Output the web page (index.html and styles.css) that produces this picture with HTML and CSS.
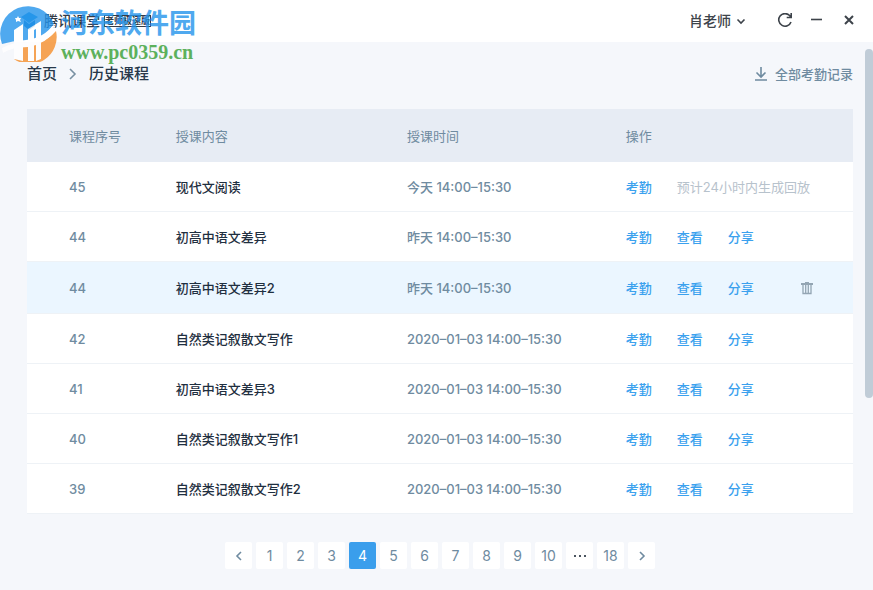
FILE: index.html
```
<!DOCTYPE html>
<html lang="zh-CN">
<head>
    <meta charset="UTF-8">
    <meta name="viewport" content="width=device-width, initial-scale=1.0">
    <title>腾讯课堂 - 历史课程</title>
    <link rel="stylesheet" href="styles.css">
</head>
<body>
    <header class="top-bar">
        <div class="brand">
            <svg class="brand-logo" viewBox="0 0 24 20" aria-hidden="true">
                <path d="M5 6 13 1l9 5-9 6z" fill="#2b9fe6"/>
                <path d="M8 9v6l5 4 6-4V9l-6 4z" fill="#1c86d1"/>
            </svg>
            <span class="brand-name">腾讯课堂</span>
            <span class="brand-tag">老师极速版</span>
        </div>
        <div class="window-controls">
            <button class="user-button" type="button">肖老师
                <svg class="caret" viewBox="0 0 12 12" aria-hidden="true"><path d="M2.500 4.500 6 8l3.500-3.500"/></svg>
            </button>
            <button class="icon-button" type="button" aria-label="刷新">
                <svg viewBox="0 0 16 16"><path d="M14 9A6.300 6.300 0 1 1 12.600 2.500L14 4.200M14.200 0v4.500H9.700"/></svg>
            </button>
            <button class="icon-button" type="button" aria-label="最小化">
                <svg viewBox="0 0 16 16"><path d="M2 6.500h11"/></svg>
            </button>
            <button class="icon-button close" type="button" aria-label="关闭">
                <svg viewBox="0 0 16 16"><path d="M4 3l8 8M12 3l-8 8"/></svg>
            </button>
        </div>
    </header>

    <div class="watermark">
        <svg class="watermark-logo" viewBox="0 0 58 58" aria-hidden="true">
            <path d="M2 40A27 27 0 1 1 54 20Q44 34 26 36Q12 37 2 40z" fill="#2494ec"/>
            <path d="M56 27A27 27 0 0 1 14 55V43Q42 43 56 27z" fill="#f58f2c"/>
            <path d="M2 44Q12 38 28 38Q44 35 54 20L56 26Q46 40 28 43Q12 43 3 49z" fill="#fff"/>
            <path d="M14 26l9-6v37l-9-2zM28 25l13-8v38l-5 2V25l-2 1v31h-6z" fill="#fff"/>
            <path d="M18 12l1 2 2 0-1 2 1 2-3-1-2 1 0-2-1-2h2z" fill="#fff"/>
        </svg>
        <div class="watermark-text">
            <span class="watermark-title">河东软件园</span>
            <span class="watermark-url">www.pc0359.cn</span>
        </div>
    </div>

    <main class="content">
        <div class="page-head">
            <nav class="breadcrumb">
                <a href="#">首页</a>
                <svg viewBox="0 0 8 12" aria-hidden="true"><path d="M1 1l5 5-5 5"/></svg>
                <span>历史课程</span>
            </nav>
            <a class="download" href="#">
                <svg viewBox="0 0 12 14" aria-hidden="true"><path d="M6 0v10M1.500 5.500 6 10l4.500-4.500M0 13h12"/></svg>
                全部考勤记录
            </a>
        </div>

        <table class="course-table">
            <thead>
                <tr>
                    <th class="col-id">课程序号</th>
                    <th class="col-name">授课内容</th>
                    <th class="col-time">授课时间</th>
                    <th class="col-action">操作</th>
                </tr>
            </thead>
            <tbody>
                <tr>
                    <td>45</td>
                    <td class="name">现代文阅读</td>
                    <td>今天 14:00–15:30</td>
                    <td><div class="actions"><a href="#">考勤</a><span class="pending">预计24小时内生成回放</span></div></td>
                </tr>
                <tr>
                    <td>44</td>
                    <td class="name">初高中语文差异</td>
                    <td>昨天 14:00–15:30</td>
                    <td><div class="actions"><a href="#">考勤</a><a href="#">查看</a><a href="#">分享</a></div></td>
                </tr>
                <tr class="active">
                    <td>44</td>
                    <td class="name">初高中语文差异2</td>
                    <td>昨天 14:00–15:30</td>
                    <td>
                        <div class="actions">
                            <a href="#">考勤</a><a href="#">查看</a><a href="#">分享</a>
                            <button class="delete" type="button" aria-label="删除">
                                <svg viewBox="0 0 12 14"><path d="M0 2h4V1h4v1h4v2H0z" fill="currentColor" stroke="none"/><path d="M2 4v8.500h8V4M4.700 4v8M7.300 4v8"/></svg>
                            </button>
                        </div>
                    </td>
                </tr>
                <tr>
                    <td>42</td>
                    <td class="name">自然类记叙散文写作</td>
                    <td>2020–01–03 14:00–15:30</td>
                    <td><div class="actions"><a href="#">考勤</a><a href="#">查看</a><a href="#">分享</a></div></td>
                </tr>
                <tr>
                    <td>41</td>
                    <td class="name">初高中语文差异3</td>
                    <td>2020–01–03 14:00–15:30</td>
                    <td><div class="actions"><a href="#">考勤</a><a href="#">查看</a><a href="#">分享</a></div></td>
                </tr>
                <tr>
                    <td>40</td>
                    <td class="name">自然类记叙散文写作1</td>
                    <td>2020–01–03 14:00–15:30</td>
                    <td><div class="actions"><a href="#">考勤</a><a href="#">查看</a><a href="#">分享</a></div></td>
                </tr>
                <tr>
                    <td>39</td>
                    <td class="name">自然类记叙散文写作2</td>
                    <td>2020–01–03 14:00–15:30</td>
                    <td><div class="actions"><a href="#">考勤</a><a href="#">查看</a><a href="#">分享</a></div></td>
                </tr>
            </tbody>
        </table>

        <nav class="pagination" aria-label="分页">
            <button type="button" aria-label="上一页"><svg viewBox="0 0 10 10"><path d="M7 1 3 5l4 4"/></svg></button>
            <button type="button">1</button>
            <button type="button">2</button>
            <button type="button">3</button>
            <button type="button" class="current" aria-current="page">4</button>
            <button type="button">5</button>
            <button type="button">6</button>
            <button type="button">7</button>
            <button type="button">8</button>
            <button type="button">9</button>
            <button type="button">10</button>
            <button type="button" class="more" aria-label="更多"><svg viewBox="0 0 14 4"><path d="M1 1h2v2H1zM6 1h2v2H6zM11 1h2v2h-2z"/></svg></button>
            <button type="button">18</button>
            <button type="button" aria-label="下一页"><svg viewBox="0 0 10 10"><path d="M3 1l4 4-4 4"/></svg></button>
        </nav>
    </main>
    <div class="scrollbar"></div>
</body>
</html>
```
FILE: styles.css
```
* {
    box-sizing: border-box;
}

body {
    margin: 0;
    min-height: 100vh;
    font-family: Inter, "Noto Sans CJK SC", sans-serif;
    font-size: 13px;
    line-height: 20px;
    color: #6f8ba0;
    background-color: #f5f7fb;
}

a {
    color: inherit;
    text-decoration: none;
}

button {
    padding: 0;
    border: none;
    background: none;
    font: inherit;
    color: inherit;
    cursor: pointer;
}

svg {
    display: block;
    fill: none;
    stroke: currentColor;
    stroke-width: 1.6;
}

.top-bar {
    display: flex;
    align-items: center;
    justify-content: space-between;
    height: 42px;
    padding: 0 16px;
    background-color: #fff;
}

.brand {
    display: flex;
    align-items: center;
    gap: 4px;
    color: #333a44;
}

.brand-logo {
    width: 24px;
    height: 20px;
    stroke: none;
}

.brand-name {
    font-size: 14px;
    font-weight: 500;
}

.brand-tag {
    border: 1px solid #333a44;
    font-size: 9px;
    line-height: 10px;
    font-weight: 700;
}

.window-controls {
    display: flex;
    align-items: center;
    gap: 16px;
    color: #3d434a;
}

.user-button {
    display: flex;
    align-items: center;
    gap: 4px;
    margin-right: 14px;
    font-size: 14px;
    font-weight: 500;
}

.caret {
    width: 12px;
    height: 12px;
}

.icon-button svg {
    width: 16px;
    height: 16px;
}

.close svg {
    stroke-width: 2;
}

/* site stamp over the top left corner */
.watermark {
    position: absolute;
    top: 4px;
    left: 0;
    display: flex;
    gap: 3px;
    opacity: 0.8;
    pointer-events: none;
}

.watermark-logo {
    width: 58px;
    height: 58px;
    stroke: none;
}

.watermark-text {
    display: flex;
    flex-direction: column;
    font-family: "Liberation Serif", "Noto Sans CJK SC", serif;
    font-weight: 700;
}

.watermark-title {
    font-size: 27px;
    line-height: 40px;
    color: #2494ec;
}

.watermark-url {
    font-size: 20px;
    line-height: 16px;
    color: #37a035;
}

.content {
    padding: 20px 20px 20px 27px;
}

.page-head {
    display: flex;
    align-items: center;
    justify-content: space-between;
    height: 24px;
    margin-bottom: 23px;
}

.breadcrumb {
    display: flex;
    align-items: center;
    gap: 12px;
    font-size: 15px;
    font-weight: 500;
    color: #27384a;
}

.breadcrumb svg {
    width: 8px;
    height: 12px;
    color: #7890a2;
}

.download {
    display: flex;
    align-items: center;
    gap: 8px;
    font-weight: 500;
}

.download svg {
    width: 12px;
    height: 14px;
}

.course-table {
    width: 100%;
    table-layout: fixed;
    border-collapse: separate;
    border-spacing: 0;
    background-color: #fff;
}

.course-table th {
    height: 53px;
    padding: 0;
    font-weight: 400;
    text-align: left;
    background-color: #e7ecf4;
}

.course-table td {
    height: 50px;
    padding: 0;
    font-weight: 500;
    border-bottom: 1px solid #eef2f6;
}

.course-table th:first-child,
.course-table td:first-child {
    padding-left: 42px;
}

.col-id {
    width: 18%;
}

.col-name {
    width: 28%;
}

.col-time {
    width: 26.5%;
}

.course-table .name {
    color: #1f2f40;
}

.course-table .active td {
    height: 52px;
    background-color: #ebf6ff;
}

.actions {
    display: flex;
    align-items: center;
    gap: 25px;
}

.actions a {
    color: #3ba1ee;
}

.pending {
    font-weight: 400;
    color: #b7c2cc;
}

.delete {
    margin-left: auto;
    margin-right: 40px;
    color: #93a5b3;
}

.delete svg {
    width: 12px;
    height: 14px;
    stroke-width: 1.3;
}

.pagination {
    display: flex;
    justify-content: center;
    gap: 4px;
    margin-top: 28px;
}

.pagination button {
    display: flex;
    align-items: center;
    justify-content: center;
    width: 27px;
    height: 27px;
    border-radius: 2px;
    font-size: 14px;
    background-color: #fff;
}

.pagination svg {
    width: 10px;
    height: 10px;
}

.pagination .current {
    color: #fff;
    background-color: #3a9eec;
}

.pagination .more svg {
    width: 14px;
    height: 4px;
    fill: #4b5560;
    stroke: none;
}

.scrollbar {
    position: absolute;
    top: 49px;
    right: 0;
    width: 8px;
    height: 349px;
    border-radius: 4px;
    background-color: #c0ccd7;
}
```
